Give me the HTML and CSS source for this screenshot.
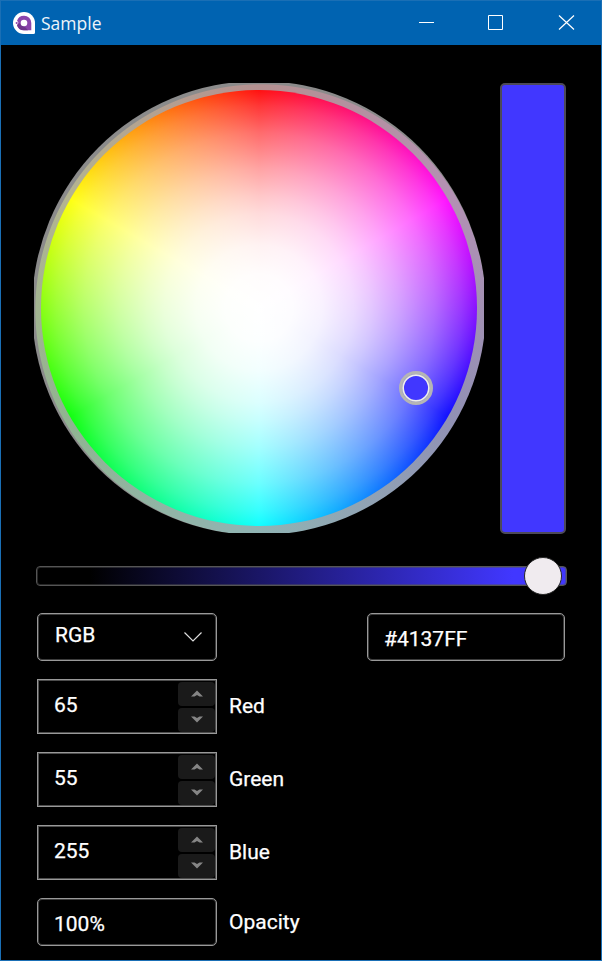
FILE: index.html
```html
<!DOCTYPE html>
<html lang="en">
<head>
<meta charset="utf-8">
<title>Sample</title>
<link rel="stylesheet" href="styles.css">
</head>
<body>
<div class="window">
  <header class="titlebar">
    <svg class="logo" width="22" height="22" viewBox="0 0 22 22">
      <path d="M11 0A11 11 0 1 0 11 22H20.500Q22 22 22 20.500V11A11 11 0 0 0 11 0Z" fill="#fff"/>
      <path d="M11 3.700A7.300 7.300 0 0 0 4 9.100A2 2 0 0 1 4 12.900A7.300 7.300 0 0 0 11 18.300H18.300V11A7.300 7.300 0 0 0 11 3.700Z" fill="#8b44ac"/>
      <path d="M4 12.900A7.300 7.300 0 0 0 11 18.300H15L12 15L6 11Z" fill="#6f358c"/>
      <circle cx="11" cy="11" r="3.300" fill="#fff"/><circle cx="3.700" cy="11" r="1.100" fill="#8b44ac"/>
    </svg>
    <h1 class="title">Sample</h1>
    <svg class="captions" width="156" height="16" viewBox="0 0 156 16" fill="none" stroke="#fff">
      <path d="M0 7.500H15"/><path d="M69.500.500H83.500V14.500H69.500Z"/><path d="M140 .500L155 14.500M155 .500L140 14.500" stroke-width="1.200"/>
    </svg>
  </header>
  <main class="picker">
    <div class="spectrum">
      <div class="wheel">
        <div class="rim"></div>
        <div class="disc"></div>
        <div class="marker"></div>
      </div>
      <div class="preview"></div>
    </div>
    <div class="slider"><div class="thumb"></div></div>
    <div class="row top">
      <div class="box select"><span>RGB</span><svg width="20" height="12" viewBox="0 0 20 12" fill="none" stroke="#ddd" stroke-width="1.200"><path d="M1.500 1.500L10 10L18.500 1.500"/></svg></div>
      <div class="box hex">#4137FF</div>
    </div>
    <div class="row channel">
      <div class="spin"><span>65</span><div class="buttons"><i><svg width="12" height="7" viewBox="0 0 12 7"><path d="M0 6.500L6 .500L12 6.500H8.500L6 5L3.500 6.500Z"/></svg></i><i><svg width="12" height="7" viewBox="0 0 12 7"><path d="M0 .500L6 6.500L12 .500H8.500L6 2L3.500 .500Z"/></svg></i></div></div>
      <label>Red</label>
    </div>
    <div class="row channel">
      <div class="spin"><span>55</span><div class="buttons"><i><svg width="12" height="7" viewBox="0 0 12 7"><path d="M0 6.500L6 .500L12 6.500H8.500L6 5L3.500 6.500Z"/></svg></i><i><svg width="12" height="7" viewBox="0 0 12 7"><path d="M0 .500L6 6.500L12 .500H8.500L6 2L3.500 .500Z"/></svg></i></div></div>
      <label>Green</label>
    </div>
    <div class="row channel">
      <div class="spin"><span>255</span><div class="buttons"><i><svg width="12" height="7" viewBox="0 0 12 7"><path d="M0 6.500L6 .500L12 6.500H8.500L6 5L3.500 6.500Z"/></svg></i><i><svg width="12" height="7" viewBox="0 0 12 7"><path d="M0 .500L6 6.500L12 .500H8.500L6 2L3.500 .500Z"/></svg></i></div></div>
      <label>Blue</label>
    </div>
    <div class="row opacity">
      <div class="box percent">100%</div>
      <label>Opacity</label>
    </div>
  </main>
</div>
</body>
</html>
```
FILE: styles.css
```css
* { box-sizing: border-box; }
body { margin: 0; background: #000; }
.window {
  width: 602px; height: 961px; overflow: hidden;
  border: 1px solid #1a6fb5; background: #000; color: #fff;
  font: 21px/26px Roboto, sans-serif;
}
.titlebar {
  height: 44px; display: flex; align-items: center;
  padding: 0 26px 0 12px; background: #0063b1;
}
.logo { margin-top: -1px; }
.title { margin: 0 0 0 6px; font: 400 17.500px/24px "Open Sans", "Noto Sans", sans-serif; color: #edf4fa; }
.captions { margin-left: auto; }
.picker { padding: 38px 35px 0 33px; -webkit-text-stroke: .25px #fff; }
.spectrum { display: flex; gap: 16px; }
.wheel { position: relative; width: 450px; height: 450px; overflow: hidden; }
.rim, .disc { position: absolute; border-radius: 50%; }
.rim {
  inset: -2px;
  background:
    radial-gradient(circle at 50.4% 50.4%, rgba(148,148,148,.7) 225px, #8b8b8b 226px),
    conic-gradient(#f88, #f8f, #88f, #8ff, #8f8, #ff8, #f88);
}
.disc {
  inset: 7px;
  background:
    radial-gradient(circle 225px, #fff 0%, rgba(255,255,255,.99) 15%, rgba(255,255,255,.95) 28%, rgba(255,255,255,.86) 42%, rgba(255,255,255,.78) 50%, rgba(255,255,255,.64) 62%, rgba(255,255,255,.42) 78%, rgba(255,255,255,.21) 90%, rgba(255,255,255,0) 100%),
    conic-gradient(#f00, #f0f, #00f, #0ff, #0f0, #ff0, #f00);
}
.marker {
  position: absolute; left: 365px; top: 288px; width: 34px; height: 34px;
  border: 3px solid #b5b5b5; border-radius: 50%;
  background: #4137ff; box-shadow: inset 0 0 0 .500px #b5b5b5, inset 0 0 0 2px #eee;
}
.preview { width: 66px; height: 451px; border: 2px solid #4d4a58; border-radius: 5px; background: #4137ff; }
.slider {
  position: relative; width: 531px; height: 20px; margin: 32px 0 0 2px;
  border: 1px solid #555; border-radius: 4px; box-shadow: inset 0 0 0 1px rgba(85,85,85,.45);
  background: linear-gradient(90deg, #000 10%, #4137ff 90%);
}
.thumb {
  position: absolute; left: 487px; top: -10px; width: 38px; height: 38px;
  border: 1.500px solid #282828; border-radius: 50%; background: #f0ebef;
}
.row { display: flex; margin-left: 3px; }
.top { margin-top: 27px; gap: 150px; }
.box { height: 48px; border: 1px solid #999; border-radius: 5px; padding: 12px 16px; box-shadow: inset 0 0 0 1px #3c3c3c; }
.select { width: 180px; display: flex; justify-content: space-between; padding: 8px 13px 0 17px; }
.select svg { margin-top: 9px; }
.hex { width: 198px; }
.channel { margin-top: 18px; }
.spin { width: 180px; height: 55px; border: 1px solid #999; box-shadow: inset 0 0 0 1px #4d4d4d; display: flex; justify-content: space-between; padding: 2px 1px 0 16px; }
.spin span { padding-top: 10px; }
.buttons { width: 37px; display: grid; grid-template-rows: 24px 24px; gap: 2px; }
.buttons i { display: flex; align-items: center; justify-content: center; padding-bottom: 2px; border-radius: 4px; background: #1a1a1a; }
.buttons svg { fill: #858585; }
label { margin: 14px 0 0 12px; }
.opacity { margin-top: 18px; }
.percent { width: 180px; }
.opacity label { margin-top: 11px; }
```
